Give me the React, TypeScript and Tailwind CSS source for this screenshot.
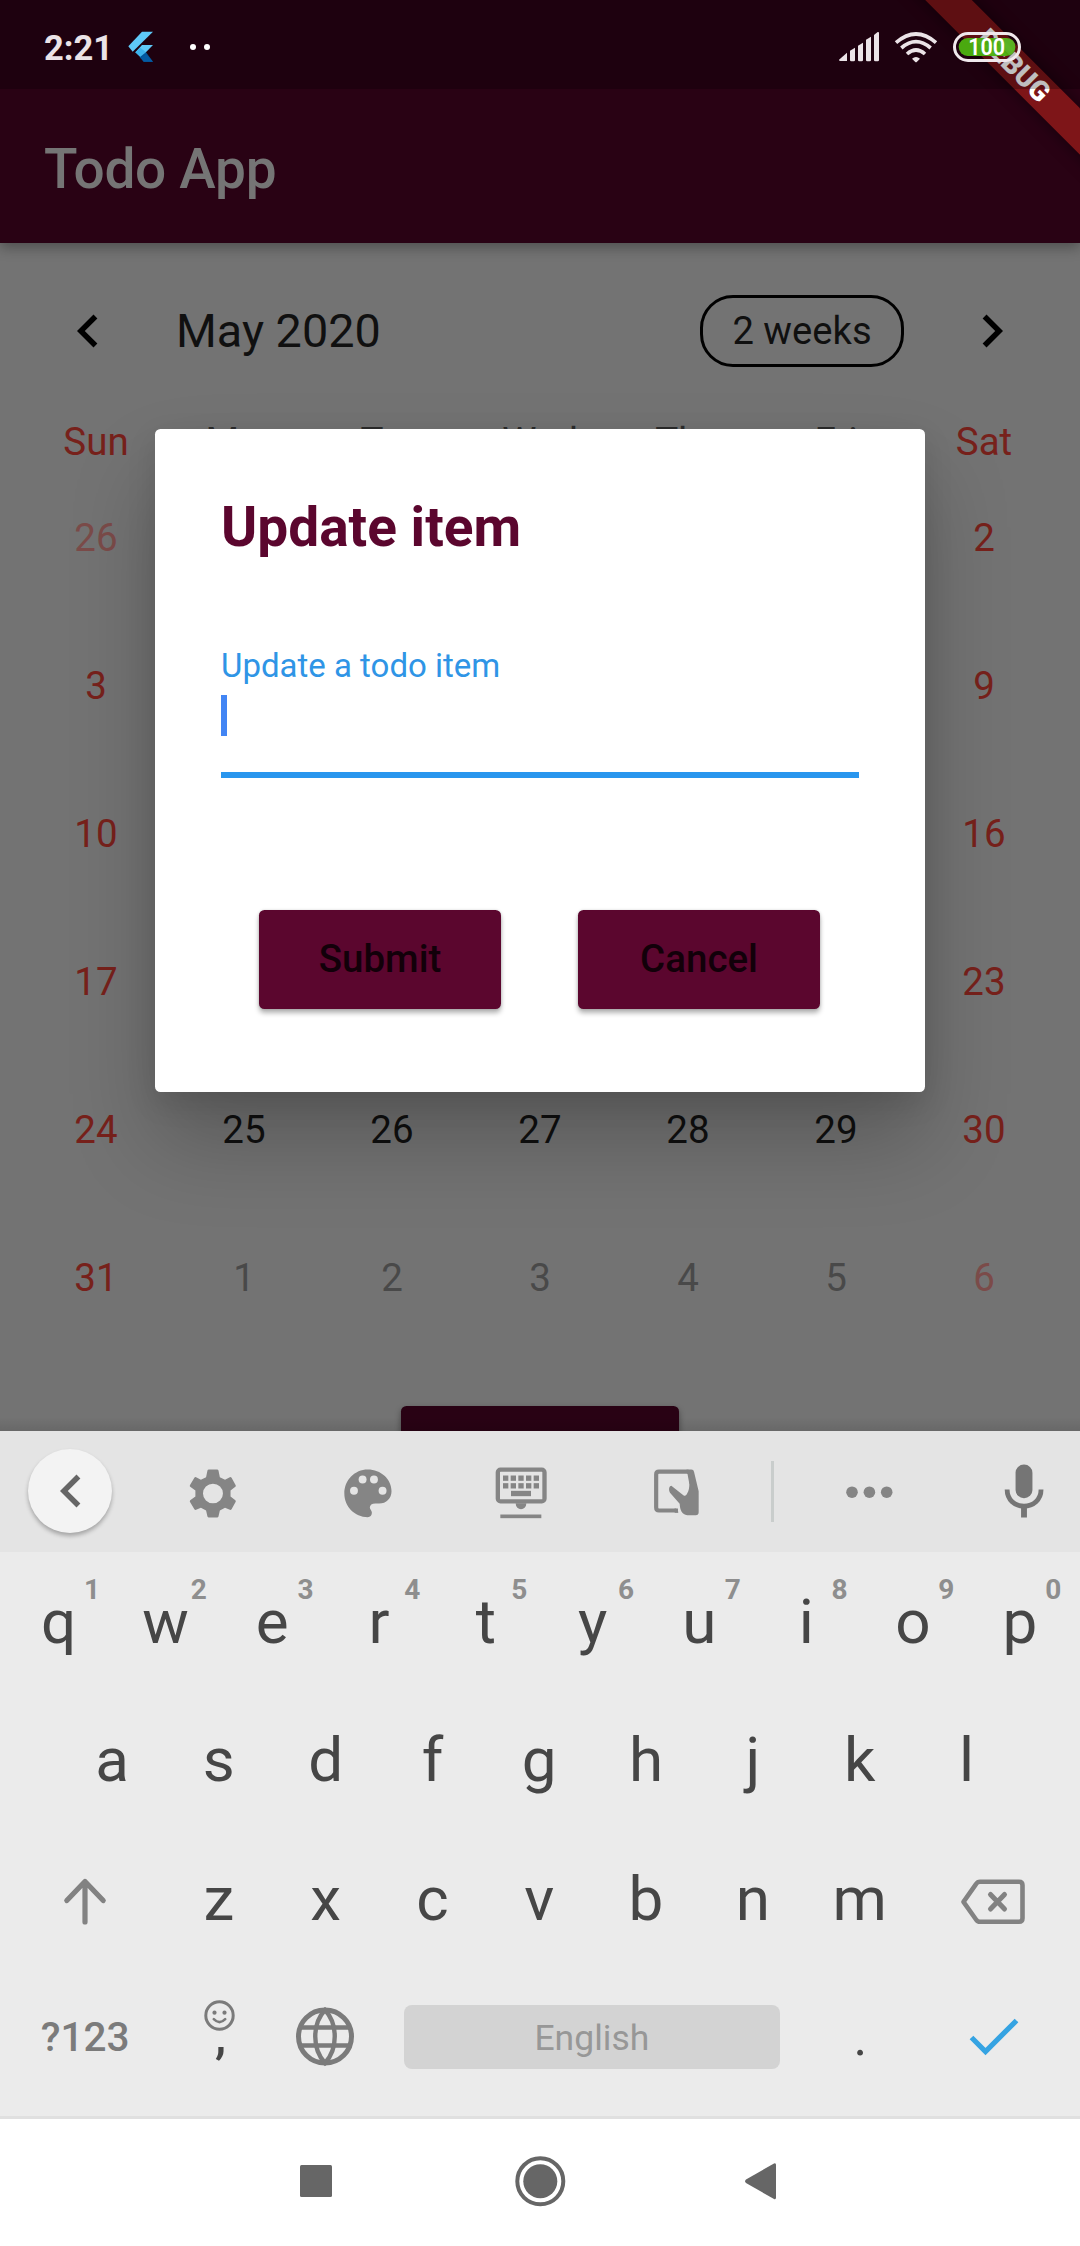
import React from "react";

const WEEKDAYS = ["Sun", "Mon", "Tue", "Wed", "Thu", "Fri", "Sat"];

// null marks the cells that the dialog covers
const WEEKS: (number | null)[][] = [
  [26, null, null, null, null, null, 2],
  [3, null, null, null, null, null, 9],
  [10, null, null, null, null, null, 16],
  [17, null, null, null, null, null, 23],
  [24, 25, 26, 27, 28, 29, 30],
  [31, 1, 2, 3, 4, 5, 6],
];

function dayColor(week: number, col: number, day: number | null) {
  const n = day ?? 0;
  const outside = (week === 0 && n > 20) || (week === 5 && n < 20);
  const weekend = col === 0 || col === 6;
  if (weekend) return outside ? "text-[#7b4b49]" : "text-[#77211b]";
  return outside ? "text-[#494949]" : "text-[#101010]";
}

function FlutterLogo() {
  return (
    <svg className="ml-[15px] mt-[4px] h-[32px] w-[26px]" viewBox="382 94 78 96">
      <path d="M424 96H457L396 156L383 140Z" fill="#5fc9f8" />
      <path d="M424 136H457L421 173L404 158Z" fill="#5fc9f8" />
      <path d="M404 158L419 144L436 158L421 174Z" fill="#3db4ee" />
      <path d="M436 158L457 186H429L417 173Z" fill="#01579b" />
      <path d="M421 174L436 164L457 186H429Z" fill="#045ba3" />
    </svg>
  );
}

function StatusIcons() {
  return (
    <svg className="h-[89px] w-[200px]" viewBox="165 0 600 267">
      <g fill="#ebe3e7">
        <path d="M177 179L201 158V183H181Q177 183 177 179Z" />
        <path d="M210 152L225 143V180Q225 184 221 184H214Q210 184 210 180Z" />
        <path d="M234 137L249 128V180Q249 184 245 184H238Q234 184 234 180Z" />
        <path d="M258 119L273 110V180Q273 184 269 184H262Q258 184 258 180Z" />
        <path d="M282 105L293 96Q297 95 297 99V180Q297 184 293 184H286Q282 184 282 180Z" />
        <path d="M396 176Q408 166 420 176L411 185Q408 188 405 185Z" />
      </g>
      <g fill="none" stroke="#ebe3e7" strokeWidth="11">
        <path d="M348 128Q408 76 468 128" />
        <path d="M364 144Q408 106 452 144" />
        <path d="M381 162Q408 138 435 162" />
      </g>
      <rect x="523.5" y="100.5" width="195" height="81" rx="40.5" fill="none" stroke="#f0e8ec" strokeWidth="9" />
      <rect x="536" y="114" width="170" height="54" rx="27" fill="#4cb010" fillOpacity="0.96" />
      <path d="M640 114H679Q706 116 706 141Q706 160 690 167Z" fill="#63b52f" fillOpacity="0.6" />
      <text x="620" y="166" textAnchor="middle" fontFamily="Roboto" fontWeight="600" fontSize="71" textLength="111" lengthAdjust="spacingAndGlyphs" fill="#fff">
        100
      </text>
    </svg>
  );
}

function DebugBanner() {
  return (
    <div className="absolute top-0 right-0 z-10 h-[240px] w-[240px] overflow-hidden">
      <div className="absolute top-[49px] left-[-26px] flex h-[33px] w-[400px] rotate-45 items-center justify-center bg-[#7e1518] text-[28px] leading-none font-black text-white shadow-[0_0_16px_rgba(0,0,0,0.5)]">
        DEBUG
      </div>
    </div>
  );
}

function Chevron({ right = false, className }: { right?: boolean; className: string }) {
  return (
    <svg className={className} viewBox="0 0 24 24" fill="currentColor">
      <path d={right ? "M10 6L8.59 7.41 13.17 12l-4.58 4.59L10 18l6-6z" : "M15.41 7.41L14 6l-6 6 6 6 1.41-1.41L10.83 12z"} />
    </svg>
  );
}

function Calendar() {
  return (
    <>
      <div className="flex h-[176px] items-center">
        <Chevron className="ml-[55px] h-[66px] w-[66px] shrink-0 text-black" />
        <div className="ml-[55px] text-[46.75px] leading-[56px] text-[#101010]">May 2020</div>
        <div className="ml-auto flex h-[72px] w-[204px] items-center justify-center rounded-[33px] border-[3px] border-black pt-px text-[38.2px] text-[#101010]">
          2 weeks
        </div>
        <Chevron right className="mr-[55.5px] ml-[54.5px] h-[66px] w-[66px] shrink-0 text-black" />
      </div>
      <div className="grid h-[45px] grid-cols-7 px-[22px] text-center text-[38.5px] leading-[45px]">
        {WEEKDAYS.map((d, i) => (
          <div key={d} className={i === 0 || i === 6 ? "text-[#77211b]" : "text-[#2c2c2c]"}>
            {d}
          </div>
        ))}
      </div>
      <div className="grid grid-cols-7 px-[22px]">
        {WEEKS.map((week, w) =>
          week.map((day, c) => (
            <div key={`${w}-${c}`} className={`flex h-[148px] items-center justify-center text-[38.5px] ${dayColor(w, c, day)}`}>
              {day}
            </div>
          ))
        )}
      </div>
      <div className="mx-auto mt-[53.5px] h-[99px] w-[277.5px] rounded-[5.5px] bg-[#290214] shadow-[0_3px_6px_rgba(0,0,0,0.4)]" />
    </>
  );
}

function DialogButton({ children }: { children: React.ReactNode }) {
  return (
    <button className="flex h-[98.5px] w-[242px] items-center justify-center rounded-[5.5px] bg-[#5b062e] text-[38.5px] font-medium text-[#120009] shadow-[0_4px_5px_rgba(0,0,0,0.3),0_0_3px_rgba(0,0,0,0.15)]">
      {children}
    </button>
  );
}

function Dialog() {
  return (
    <div className="absolute top-[428.5px] left-[155px] flex h-[663px] w-[770px] flex-col rounded-[5.5px] bg-white px-[66px] shadow-[0_50px_85px_rgba(0,0,0,0.22),0_10px_30px_rgba(0,0,0,0.1)]">
      <h2 className="mt-[66.5px] text-[55px] leading-[65px] font-bold text-[#5b062e]">Update item</h2>
      <label className="mt-[86px] text-[33px] leading-[40px] text-[#2f95e6]">Update a todo item</label>
      <div className="mt-[8.5px] h-[83px] w-[638px] border-b-[6px] border-[#2996ee]">
        <div className="h-[41.5px] w-[6px] bg-[#4285f4]" />
      </div>
      <div className="mt-[132.5px] ml-[-1px] flex justify-center gap-[77px]">
        <DialogButton>Submit</DialogButton>
        <DialogButton>Cancel</DialogButton>
      </div>
    </div>
  );
}

function Toolbar() {
  return (
    <div className="flex h-[121px] items-center bg-[#e4e4e4] text-[#858585]">
      <div className="ml-[27.5px] mb-px flex h-[84px] w-[84px] shrink-0 items-center justify-center rounded-full bg-[#f3f3f3] text-[#666] shadow-[0_3px_4px_rgba(0,0,0,0.28)]">
        <Chevron className="ml-[3px] h-[66px] w-[66px]" />
      </div>
      <svg className="ml-[71px] h-[60px] w-[60px] shrink-0" viewBox="530 124.5 174.2 180" preserveAspectRatio="none" fill="currentColor" fillRule="evenodd">
        <path d="M605 147H629Q632 147 633 150L637 170L652 178L666 170Q669 169 671 172L683 194Q684 197 682 199L668 210V228L682 239Q684 241 683 244L671 266Q669 269 666 268L652 262L637 270L633 288Q632 291 629 291H605Q602 291 601 288L597 270L582 262L568 268Q565 269 563 266L550 244Q549 241 551 239L566 228V210L551 199Q549 197 550 194L563 172Q565 169 568 170L582 178L597 170L601 150Q602 147 605 147ZM588 219A29 29.5 0 1 0 646 219A29 29.5 0 1 0 588 219Z" />
      </svg>
      <svg className="ml-[95.5px] h-[60px] w-[60px] shrink-0" viewBox="981.6 124.5 174.2 180" preserveAspectRatio="none">
        <path
          fill="currentColor"
          d="M1068 147C1030 147 1000 179 1000 219C1000 258 1030 290 1068 290C1075 290 1080 285 1080 277C1080 270 1074 267 1074 261C1074 254 1080 249 1090 249H1101C1122 249 1137 233 1137 212C1137 176 1106 147 1068 147Z"
        />
        <g fill="#e4e4e4">
          <ellipse cx="1028" cy="211" rx="11.5" ry="12" />
          <ellipse cx="1053" cy="177" rx="11.5" ry="12" />
          <ellipse cx="1086" cy="177" rx="11.5" ry="12" />
          <ellipse cx="1111" cy="211" rx="11.5" ry="12" />
        </g>
      </svg>
      <svg className="ml-[93px] h-[60px] w-[60px] shrink-0" viewBox="33 34.5 180 180" fill="currentColor">
        <rect x="53.5" y="57.5" width="140" height="95" rx="8" fill="none" stroke="currentColor" strokeWidth="13" />
        <path d="M107 158H139A16 18 0 0 1 107 158Z" />
        <rect x="61" y="192" width="123" height="11" />
        <rect x="93" y="121" width="60" height="16" />
        {[69, 92, 115, 138, 161].map((x) => (
          <g key={x}>
            <rect x={x} y="75" width="16" height="16" />
            <rect x={x} y="98" width="16" height="16" />
          </g>
        ))}
      </svg>
      <svg className="ml-[95px] h-[60px] w-[60px] shrink-0" viewBox="498 34.5 180 180" fill="currentColor">
        <path d="M594 180H537Q528.500 180 528.500 171V72Q528.500 63.500 537 63.500H620Q634 63.500 634 78V100" fill="none" stroke="currentColor" strokeWidth="12.500" />
        <path d="M584 173Q594 174 595 187H584Z" />
        <path d="M620 57H634Q641 57 642 64L656 122V185Q656 194 647 194H622C606 192 600 180 599 160L570 127C565 118 567 107 574 106L610 134C616 138 619 134 621 130C627 122 628 110 628 100Z" />
      </svg>
      <div className="ml-[65px] h-[61px] w-[3px] bg-[#c9cdcc]" />
      <svg className="ml-[65px] h-[60px] w-[60px] shrink-0" viewBox="0 0 60 60" fill="currentColor">
        <circle cx="13" cy="30.200" r="5.800" />
        <circle cx="30.400" cy="30.200" r="5.800" />
        <circle cx="47.700" cy="30.200" r="5.800" />
      </svg>
      <svg className="ml-[95px] h-[60px] w-[60px] shrink-0 text-[#757575]" viewBox="1318.4 124.5 174.2 180" preserveAspectRatio="none">
        <rect x="1381" y="132" width="49" height="101" rx="24.500" fill="currentColor" />
        <path d="M1356.500 207C1356.500 238 1379 257 1405.500 257S1455 238 1455 207" fill="none" stroke="currentColor" strokeWidth="14" />
        <rect x="1397" y="255" width="17" height="36" fill="currentColor" />
      </svg>
    </div>
  );
}

function Key({ char, hint }: { char: string; hint?: string }) {
  return (
    <div className="relative flex h-[138.5px] w-[106.8px] items-center justify-center pr-[1.5px] text-[62px] text-[#464646]">
      {char}
      {hint && (
        <span className="absolute top-[22px] left-[76px] w-[20px] text-center text-[28px] leading-[32px] font-bold text-[#8e8e8e]">{hint}</span>
      )}
    </div>
  );
}

function Keyboard() {
  return (
    <div className="flex h-[564px] flex-col bg-[#ebebeb] px-[6px]">
      <div className="flex">
        {"qwertyuiop".split("").map((c, i) => (
          <Key key={c} char={c} hint={String((i + 1) % 10)} />
        ))}
      </div>
      <div className="flex justify-center">
        {"asdfghjkl".split("").map((c) => (
          <Key key={c} char={c} />
        ))}
      </div>
      <div className="flex items-center">
        <div className="flex w-[160.2px] justify-center text-[#828282]">
          <svg className="mr-[2px] mt-[5px] h-[50px] w-[46px]" viewBox="0 0 46 50" fill="none" stroke="currentColor" strokeWidth="5.200" strokeLinecap="round" strokeLinejoin="round">
            <path d="M23 46V5.500M4.800 24.500L23 5.500L41.200 24.500" />
          </svg>
        </div>
        {"zxcvbnm".split("").map((c) => (
          <Key key={c} char={c} />
        ))}
        <div className="flex w-[160.2px] justify-center text-[#828282]">
          <svg className="mr-[2px] mt-[5px] h-[50px] w-[68px]" viewBox="0 0 68 50" fill="none" stroke="currentColor" strokeWidth="4.600" strokeLinecap="round" strokeLinejoin="round">
            <path d="M21 5.800H60Q63.500 5.800 63.500 9.300V42.300Q63.500 45.800 60 45.800H21Q18.500 45.800 17 43.500L4.500 25.800L17 8.100Q18.500 5.800 21 5.800Z" />
            <path d="M31.500 18.500L45.500 33M45.500 18.500L31.500 33" strokeWidth="5" />
          </svg>
        </div>
      </div>
      <div className="flex h-[138.5px] items-center">
        <div className="w-[160.2px] pt-[2px] pr-[2px] text-center text-[40.5px] font-medium text-[#7b7b7b]">?123</div>
        <div className="relative flex h-full w-[106.8px] justify-center">
          <svg className="mr-[1px] mt-[32px] h-[31px] w-[31px]" viewBox="0 0 31 31">
            <circle cx="15.500" cy="15.500" r="13.700" fill="none" stroke="#7b7b7b" strokeWidth="3" />
            <circle cx="10.500" cy="12.700" r="2.100" fill="#7b7b7b" />
            <circle cx="20.500" cy="12.700" r="2.100" fill="#7b7b7b" />
            <path d="M9.800 19.200Q15.500 25 21.200 19.200" fill="none" stroke="#7b7b7b" strokeWidth="2.600" strokeLinecap="round" />
          </svg>
          <span className="absolute top-[38px] left-[1px] w-full text-center text-[50px] leading-[60px] font-medium text-[#464646]">,</span>
        </div>
        <div className="flex w-[106.8px] justify-center">
          <svg className="mr-[3px] h-[60px] w-[60px]" viewBox="0 0 60 60" fill="none" stroke="#7b7b7b" strokeWidth="5">
            <circle cx="30" cy="29.500" r="26.500" />
            <path d="M5 20.500H55M5 38.500H55" strokeWidth="4.600" />
            <path d="M30 3C17 17 17 42 30 56C43 42 43 17 30 3Z" strokeWidth="4.400" />
          </svg>
        </div>
        <div className="flex w-[427.2px] justify-center">
          <div className="mr-[3px] flex h-[64px] w-[376px] items-center justify-center rounded-[8px] bg-[#d3d3d3] pt-[3px] text-[35.5px] text-[#979797]">English</div>
        </div>
        <div className="flex w-[106.8px] justify-center">
          <span className="pt-[2px] text-[52px] leading-[60px] font-normal text-[#464646]">.</span>
        </div>
        <div className="flex w-[160.2px] justify-center">
          <svg className="h-[40px] w-[50px]" viewBox="0 0 50 40" fill="none" stroke="#35a3e2" strokeWidth="5.200">
            <path d="M2.500 20.500L16.500 34.500L47.500 3.500" />
          </svg>
        </div>
      </div>
    </div>
  );
}

function NavBar() {
  return (
    <div className="flex h-[130px] justify-center border-t-[3px] border-[#e0e0e0] bg-white">
      <svg className="h-[127px] w-[540px]" viewBox="270 2119 540 127" fill="#666">
        <rect x="300" y="2165" width="32" height="32" rx="1.500" />
        <circle cx="540.300" cy="2181.300" r="17" />
        <circle cx="540.300" cy="2181.300" r="23" fill="none" stroke="#666" strokeWidth="4" />
        <path d="M774 2163.400Q776 2162.500 776 2165V2197.500Q776 2200 774 2199L746 2183Q744 2181.300 746 2179.500Z" />
      </svg>
    </div>
  );
}

export default function App() {
  return (
    <div className="flex h-[2246px] w-[1080px] flex-col overflow-hidden bg-white font-[Roboto,sans-serif]">
      <div className="relative h-[1431px] overflow-hidden bg-[#737373]">
        <header className="relative h-[243px] bg-[#290214] shadow-[0_5px_12px_rgba(0,0,0,0.3)]">
          <DebugBanner />
          <div className="relative z-20 flex h-[89px] items-center bg-black/25 text-[#ebe3e7]">
            <div className="ml-[44px] mt-[7px] text-[34.5px] leading-[40px] font-bold">2:21</div>
            <FlutterLogo />
            <div className="ml-[36px] mt-[5px] flex gap-[8px]">
              <i className="h-[6px] w-[6px] rounded-full bg-white" />
              <i className="h-[6px] w-[6px] rounded-full bg-white" />
            </div>
            <div className="mr-[45px] ml-auto">
              <StatusIcons />
            </div>
          </div>
          <h1 className="ml-[44px] mt-[47.5px] text-[55px] leading-[65px] font-medium tracking-[-0.3px] text-[#757575]">Todo App</h1>
        </header>
        <Calendar />
        <Dialog />
        <div className="absolute bottom-0 left-0 h-[14px] w-full bg-linear-to-b from-transparent to-black/10" />
      </div>
      <Toolbar />
      <Keyboard />
      <NavBar />
    </div>
  );
}
